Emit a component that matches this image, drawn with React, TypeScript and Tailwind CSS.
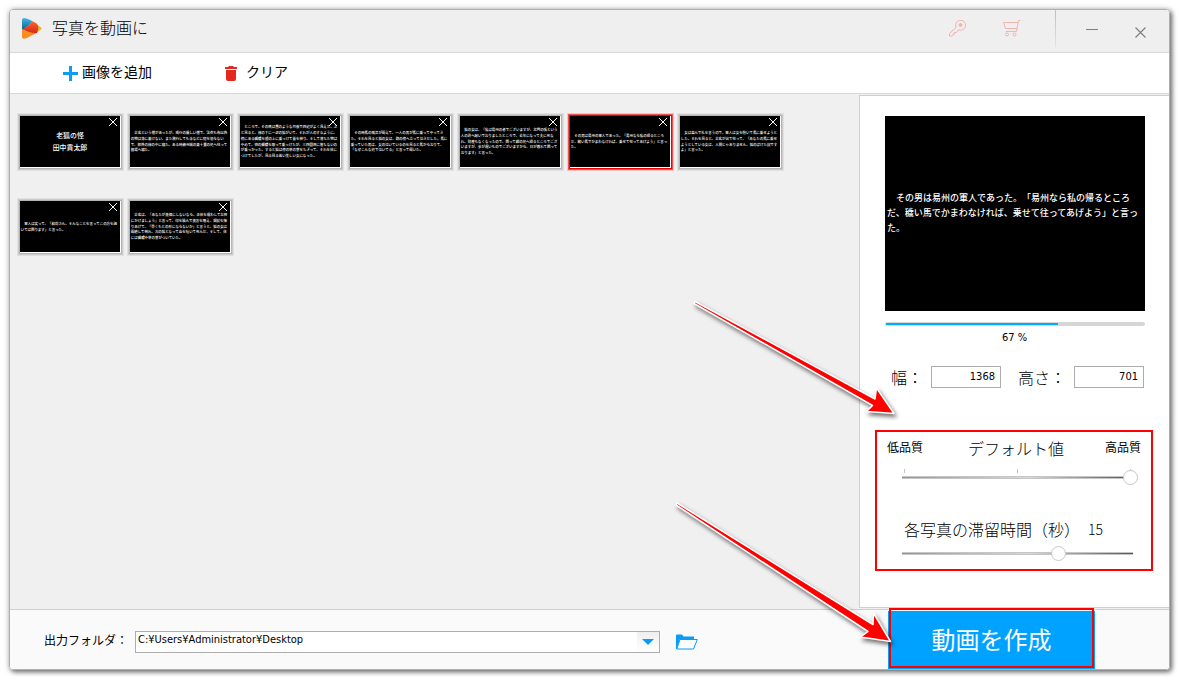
import React, { useState } from 'react';

type Slide = {
  lines: string[];
  title?: boolean;
};

const slides: Slide[] = [
  { title: true, lines: ['老狐の怪', '田中貢太郎'] },
  {
    lines: [
      '　志玄という僧があったが、戒行の厳しい僧で、法衣も布以外',
      'の物は身に着けない、また旅行しても寺などに宿を借らない',
      'で、郭外の林の中に寝た。ある時絳州城の東十里の処へ往って',
      '墓場へ寝た。',
    ],
  },
  {
    lines: [
      '　ところで、その晩は昼のような月夜で四辺がよく見えた。ふ',
      'と見ると、林の下に一疋の狐がいて、それが人のするように、',
      '傍にある髑髏を頭の上に乗っけて首を掉り、そして落ちた物は',
      'やめて、他の髑髏を取って乗っけたが、三四回目に落ちないの',
      'が乗っかった。すると狐は傍の草の葉をちぎって、それを体に',
      'つけてしたが、見る見る若い美しい女になった。',
    ],
  },
  {
    lines: [
      '　その時馬の鳴声が聞えて、一人の男が馬に乗ってやってき',
      'た。それを見ると狐の女は、路の傍へ立って泣きだした。馬に',
      '乗っていた男は、女の泣いているのを見ると馬からおりて、',
      '「なぜこんな処で泣いてる」と言って聞いた。',
    ],
  },
  {
    lines: [
      '　狐の女は、「私は易州の者でございますが、北門の張という',
      '人の許へ嫁いでおりましたところで、去年になって夫に死な',
      'れ、財産もなくなったので、困って親の処へ帰るところでござ',
      'いますが、歩が遅いものでございますから、日が暮れて困って',
      'おります」と言った。',
    ],
  },
  {
    lines: [
      '　その男は易州の軍人であった。「易州なら私の帰るところ',
      'だ、穢い馬でかまわなければ、乗せて往ってあげよう」と言っ',
      'た。',
    ],
  },
  {
    lines: [
      '　女は喜んで礼を言うので、軍人は女を抱いて馬に乗せようと',
      'した。それを見ると、志玄が出て往って、「あなたの馬に乗せ',
      'ようとしている女は、人間じゃありません、狐のばけた奴です',
      'よ」と言った。',
    ],
  },
  {
    lines: [
      '　軍人は笑って、「和尚さん、そんなことを言ってこの方を誣',
      'いては困ります」と言った。',
    ],
  },
  {
    lines: [
      '　志玄は、「あなたが真個にしないなら、正体を現わしてお目',
      'にかけましょう」と言って、印を結んで真言を唱え、錫杖を揮',
      'りあげて、「早くもとの形にならないか」と言うと、狐の女は',
      '悶絶して倒れ、古の狐となって血を吐いて死んだ、そして、体',
      'には髑髏や草の葉がついていた。',
    ],
  },
];

function SlideImage({ slide }: { slide: Slide }) {
  const size = slide.title ? 18 : 9;
  const pitch = slide.title ? 29 : 15;
  const first = 66 - ((slide.lines.length - 1) * pitch) / 2 + size * 0.37;
  return (
    <svg viewBox="0 0 260 133" className="block w-full" fill="#fff" aria-hidden="true">
      {slide.lines.map((line, i) => (
        <text
          key={line}
          x={slide.title ? 130 : 2}
          y={first + i * pitch}
          fontSize={size}
          textAnchor={slide.title ? 'middle' : 'start'}
          className="font-medium"
        >
          {line}
        </text>
      ))}
    </svg>
  );
}

function Logo() {
  return (
    <svg width="20" height="21" viewBox="0 0 20 21" aria-hidden="true">
      <defs>
        <linearGradient id="logo-blue" x1="0" y1="0" x2="0" y2="1">
          <stop offset="0" stopColor="#43b8e8" />
          <stop offset="1" stopColor="#0a5f8c" />
        </linearGradient>
        <linearGradient id="logo-red" x1="0" y1="0" x2="0" y2="1">
          <stop offset="0" stopColor="#f4662a" />
          <stop offset="1" stopColor="#d9201a" />
        </linearGradient>
      </defs>
      <path d="M14 6l4.500 3q2 1.500 0 3L14 15z" fill="#e3b62c" />
      <path d="M0 2Q0 0 2 0q2 0 5 1.500l4 2L1 12 0 11z" fill="url(#logo-blue)" />
      <path d="M1 11.500L11 3.500q4 1.500 5 4 1 4-1 7.500L9 16z" fill="url(#logo-red)" />
      <path d="M0 11.500l9 3 5 .8L5 20q-5 2-5-1z" fill="#fb8c1e" />
    </svg>
  );
}

function QualitySlider(props: React.InputHTMLAttributes<HTMLInputElement>) {
  return (
    <input
      type="range"
      className="block h-[17px] w-full appearance-none bg-[linear-gradient(90deg,#1fe03c,#f4f01c_55%,#f01010),linear-gradient(#c6c6c6,#c6c6c6)] bg-[length:calc(100%-10px)_1px,calc(100%-10px)_3px] bg-center bg-no-repeat [&::-webkit-slider-thumb]:h-[15px] [&::-webkit-slider-thumb]:w-[15px] [&::-webkit-slider-thumb]:appearance-none [&::-webkit-slider-thumb]:rounded-full [&::-webkit-slider-thumb]:border [&::-webkit-slider-thumb]:border-[#c8c8c8] [&::-webkit-slider-thumb]:bg-white"
      {...props}
    />
  );
}

function Header() {
  return (
    <header className="flex h-[43px] items-center rounded-t-[3px] border-b border-[#d8d8d8] bg-[#efefef] pr-[23px] pb-[5px] pl-3">
      <Logo />
      <h1 className="ml-[10px] flex-1 pb-1 text-base leading-5 font-light">写真を動画に</h1>
      <button aria-label="登録" className="mr-[37px]">
        <svg width="17" height="17" viewBox="0 0 17 17" fill="none" stroke="#efb3b0" aria-hidden="true">
          <path d="M7.100 7.500A5 5 0 1 1 9.500 9.800L7.500 12.500H5.500V14H4v1.500L3.500 16H.5v-2.500z" />
          <circle cx="11.500" cy="5" r="1.500" fill="#efb3b0" />
        </svg>
      </button>
      <button aria-label="購入" className="mr-[34px]">
        <svg width="18" height="17" viewBox="0 0 18 17" fill="none" stroke="#efb3b0" aria-hidden="true">
          <path d="M17.500 .5H15.500L13.500 11.500H3M.5 2.500H15M.5 2.500L2.500 8.500H14" />
          <circle cx="4" cy="14.500" r="1.500" />
          <circle cx="11.500" cy="14.500" r="1.500" />
        </svg>
      </button>
      <span className="h-full w-px bg-linear-to-b from-[#bdbdbd] to-[#e4e4e4]" />
      <div className="ml-[30px] flex items-center gap-[37px] pt-2 text-[#808080]">
        <button aria-label="最小化">
          <svg width="12" height="11" viewBox="0 0 12 11" stroke="currentColor" aria-hidden="true">
            <path d="M0 2.500h12" />
          </svg>
        </button>
        <button aria-label="閉じる">
          <svg width="11" height="11" viewBox="0 0 11 11" stroke="currentColor" strokeWidth="1.200" aria-hidden="true">
            <path d="M.5 .5l10 10M10.500 .5l-10 10" />
          </svg>
        </button>
      </div>
    </header>
  );
}

function Toolbar() {
  return (
    <div className="flex h-[41px] items-center border-b border-[#d8d8d8] bg-white pl-[53px] text-sm">
      <button className="flex items-center gap-1">
        <svg width="15" height="15" viewBox="0 0 15 15" fill="#0b9cf5" aria-hidden="true">
          <path d="M6 0h3v6h6v3H9v6H6V9H0V6h6z" />
        </svg>
        <span className="pb-1">画像を追加</span>
      </button>
      <button className="ml-[73px] flex items-center gap-[9px]">
        <svg width="12" height="15" viewBox="0 0 12 15" fill="#e3281e" aria-hidden="true">
          <path d="M4 0h4l1 1h3v2H0V1h3zM1 4h10v9q0 2-2 2H3q-2 0-2-2z" />
        </svg>
        <span className="pb-1">クリア</span>
      </button>
    </div>
  );
}

function Thumbnail({ slide, selected, onSelect }: { slide: Slide; selected: boolean; onSelect: () => void }) {
  return (
    <li
      className={
        selected
          ? 'relative w-[103px] border border-[#f00000] bg-white pr-px pb-px shadow-[0_0_0_1px_#f25050,0_0_0_2px_#f4c4c4]'
          : 'relative w-[103px] border border-[#b4b4b4] bg-white pr-px pb-px shadow-[0_0_0_1px_#cccccc,0_0_0_2px_#e0e0e0]'
      }
    >
      <button onClick={onSelect} aria-label={slide.lines[0]} className="block w-full overflow-hidden bg-black">
        <SlideImage slide={slide} />
      </button>
      <button aria-label="削除" className="absolute top-[2px] right-1">
        <svg width="8" height="8" viewBox="0 0 8 8" stroke="#fff" aria-hidden="true">
          <path d="M0 0l8 8M8 0L0 8" />
        </svg>
      </button>
    </li>
  );
}

function Sidebar({ slide }: { slide: Slide }) {
  const [stay, setStay] = useState(15);
  const sizeInput =
    'h-[22px] w-[70px] border border-[#adadad] bg-white pr-[5px] pb-[2px] text-right font-[DejaVu_Sans_Condensed,Noto_Sans_CJK_JP,sans-serif] text-[11px] leading-4';

  return (
    <aside className="mt-px mb-px w-[310px] shrink-0 border-y border-l border-[#cfcfcf] bg-white pt-5">
      <div className="mx-auto flex h-[195px] w-[260px] items-center bg-black">
        <SlideImage slide={slide} />
      </div>
      <div
        role="progressbar"
        aria-valuenow={67}
        aria-label="進行状況"
        className="mx-auto mt-[11px] h-1 w-[260px] rounded-sm bg-[#d6d6d6] p-px"
      >
        <div className="h-full bg-[#00aeff]" style={{ width: '67%' }} />
      </div>
      <p className="mt-1 text-center font-[DejaVu_Sans_Condensed,Noto_Sans_CJK_JP,sans-serif] text-[11px] leading-4">
        67 %
      </p>

      <div className="mt-5 flex items-center pl-[31px] text-base leading-5 font-light">
        <label htmlFor="width" className="w-10">幅：</label>
        <input id="width" defaultValue="1368" className={sizeInput} />
        <label htmlFor="height" className="ml-[17px] w-14">高さ：</label>
        <input id="height" defaultValue="701" className={sizeInput} />
      </div>

      {/* Quality and duration */}
      <div className="mt-[42px] mr-4 ml-[15px] h-[141px] border-2 border-[#ff0000] px-[10px] font-light">
        <div className="flex items-start justify-between pt-[6px] text-xs leading-[18px]">
          <span className="font-normal">低品質</span>
          <label htmlFor="quality" className="pb-px pl-1 text-base leading-5">デフォルト値</label>
          <span className="font-normal">高品質</span>
        </div>
        <div className="mr-[3px] ml-[10px]">
          <div className="mt-[10px] -mb-1 flex h-1 justify-between px-[7px]">
            <span className="w-px bg-[#c4c4c4]" />
            <span className="w-px bg-[#c4c4c4]" />
            <span className="w-px bg-[#c4c4c4]" />
          </div>
          <QualitySlider id="quality" min={0} max={2} defaultValue={2} />
        </div>
        <div className="mt-[33px] ml-[17px] flex text-base leading-5">
          <label htmlFor="stay">各写真の滞留時間（秒）</label>
          <output htmlFor="stay" className="ml-2 text-sm leading-5">{stay}</output>
        </div>
        <div className="mt-[6px] mr-[3px] ml-[10px]">
          <QualitySlider id="stay" min={0} max={22} value={stay} onChange={(e) => setStay(Number(e.target.value))} />
        </div>
      </div>
    </aside>
  );
}

function Footer() {
  return (
    <footer className="flex h-[60px] items-center rounded-b-[3px] border-t border-[#cfcfcf] bg-[#fafafa] pl-[34px]">
      <label htmlFor="folder" className="w-[91px] text-xs">出力フォルダ：</label>
      <div className="relative mt-[5px] flex-1">
        <select
          id="folder"
          className="block h-[22px] w-full appearance-none border border-[#adadad] bg-white pb-1 pl-[2px] font-[DejaVu_Sans_Condensed,Noto_Sans_CJK_JP,sans-serif] text-[11px] leading-4"
        >
          <option>C:¥Users¥Administrator¥Desktop</option>
        </select>
        <span className="pointer-events-none absolute top-px right-px flex h-5 w-[22px] items-center justify-center bg-linear-to-b from-[#efefef] to-white">
          <svg width="12" height="6" viewBox="0 0 12 6" fill="#0b9cf5" aria-hidden="true">
            <path d="M0 0h12L6 6z" />
          </svg>
        </span>
      </div>
      <button aria-label="フォルダを開く" className="mt-[5px] ml-4">
        <svg width="22" height="16" viewBox="0 0 22 16" aria-hidden="true">
          <path d="M0 15V1.500Q0 .5 1 .5h5l1.500 2H18V5H4L.8 15z" fill="#0b9cf5" />
          <path d="M4 5.500h17.300L17.500 15H.8z" fill="#fff" stroke="#0b9cf5" />
        </svg>
      </button>
      <button className="relative mt-[1px] mr-[74px] ml-[190px] h-[58px] w-[207px] bg-[#00a2ff] pb-[2px] text-2xl text-white">
        動画を作成
        <span className="absolute -top-[3px] right-px bottom-px left-px border-2 border-[#ff0000]" />
      </button>
    </footer>
  );
}

function Arrows() {
  return (
    <svg
      width="240"
      height="370"
      viewBox="0 0 240 370"
      fill="#ff0000"
      stroke="#fff"
      strokeWidth="1.500"
      strokeLinejoin="round"
      className="pointer-events-none absolute top-[285px] right-[259px] drop-shadow-[2px_3px_2px_rgba(0,0,0,0.55)]"
      aria-hidden="true"
    >
      <path d="M25 6.500L205 104l1.500-11L224 118.500l-27.500-2 6-6L24 8.500z" />
      <path d="M7 208L203 329.500l.5-11.500 17 28.500-30-4.500 7.500-5.500L6 210z" />
    </svg>
  );
}

export default function App() {
  const [selected, setSelected] = useState(5);

  return (
    <div
      lang="ja"
      className="flex min-h-screen flex-col bg-white pt-[9px] pr-[10px] pb-[10px] pl-[9px] font-[Noto_Sans_CJK_JP,sans-serif] text-black [text-spacing-trim:space-all]"
    >
      <div className="relative flex flex-1 flex-col rounded-[4px] border border-[#b0b0b0] shadow-[2px_2px_5px_rgba(0,0,0,0.55),0_0_6px_rgba(0,0,0,0.2)]">
        <Header />
        <Toolbar />
        <main className="flex flex-1 bg-[#f0f0f0]">
          <ul className="flex flex-1 flex-wrap content-start gap-x-[7px] gap-y-[31px] pt-[21px] pr-6 pl-[9px]">
            {slides.map((slide, i) => (
              <Thumbnail key={slide.lines[0]} slide={slide} selected={i === selected} onSelect={() => setSelected(i)} />
            ))}
          </ul>
          <Sidebar slide={slides[selected]} />
        </main>
        <Footer />
        <Arrows />
      </div>
    </div>
  );
}
